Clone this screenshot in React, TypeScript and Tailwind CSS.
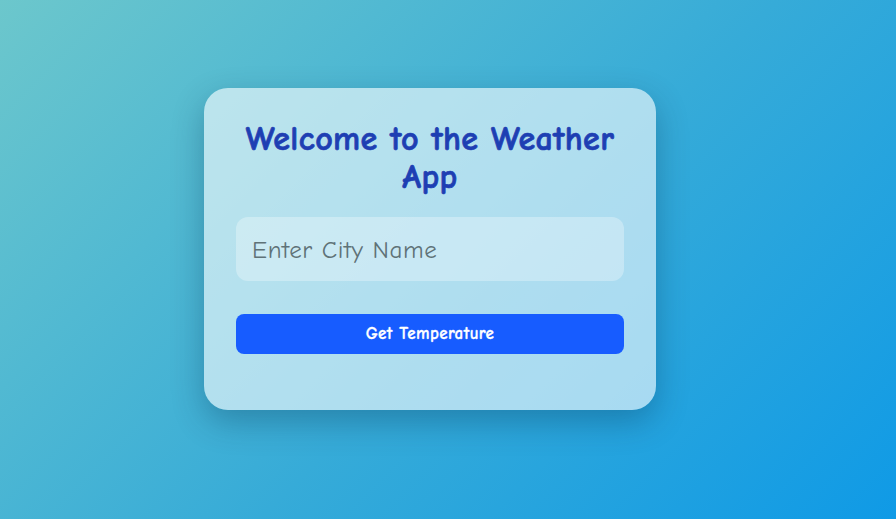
import React from "react";

export default function App() {
  return (
    <div className="w-[896px] h-[519px] flex items-center justify-center pr-[36px] pb-[21px] font-['Comic_Sans_MS','Comic_Neue','Open_Sans',sans-serif] bg-[linear-gradient(135deg,#6cc7cc_0%,#36abd8_55%,#0f9ae6_100%)]">
      <div className="w-[452px] h-[322px] rounded-[24px] bg-white/60 shadow-[0_12px_32px_rgba(0,40,70,0.3)] px-8 pt-8 flex flex-col">
        <h1 className="text-center text-[34px] leading-[38px] font-black text-[#1e3fb3] tracking-[0.4px] [-webkit-text-stroke:0.7px_#1e3fb3]">
          Welcome to the Weather
          <br />
          App
        </h1>
        <input
          className="mt-[21px] h-16 w-full rounded-xl bg-white/30 px-4 text-[25px] tracking-[0.6px] font-['Comic_Sans_MS','Comic_Neue','Open_Sans',sans-serif] text-[#1e293b] placeholder:text-[#5f7277] outline-none"
          placeholder="Enter City Name"
        />
        <button className="mt-[33px] h-10 w-full rounded-lg bg-[#175cff] text-white text-[17px] font-black tracking-[0.4px] [-webkit-text-stroke:0.3px_#ffffff] font-['Comic_Sans_MS','Comic_Neue','Open_Sans',sans-serif]">
          Get Temperature
        </button>
      </div>
    </div>
  );
}
